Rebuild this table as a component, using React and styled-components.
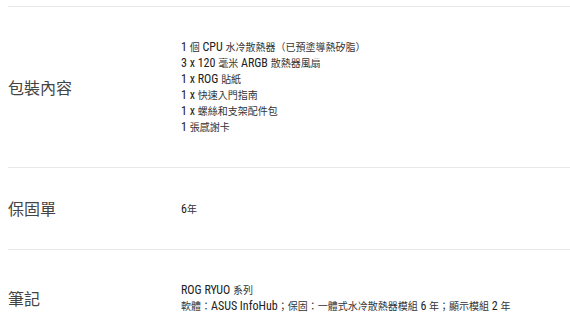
import React from "react"
import styled, { createGlobalStyle } from "styled-components"

const GlobalStyle = createGlobalStyle`
  body {
    margin: 0;
    background: #fff;
    overflow: hidden;
  }
`
const Table = styled.div`
  padding: 6px 0 0 8px;
  font-family: "Roboto Condensed", "Liberation Sans Narrow", Roboto, "Noto Sans CJK TC", sans-serif;
  color: #333;
`
const Row = styled.div`
  display: grid;
  grid-template-columns: 173px 1fr;
  align-items: center;
  border-top: 1px solid #e8e8e8;
  padding: 32px 0;
`
const Label = styled.div`
  font-family: "Noto Sans CJK TC", sans-serif;
  font-size: 16px;
  color: #444;
  line-height: 17px;
`
const Value = styled.div`
  font-size: 12px;
  line-height: 16px;
  color: #222;
`
const Line = styled.div`
  white-space: nowrap;
`
// CJK glyphs sit a bit smaller than the condensed latin in the original
const Han = styled.span`
  font-family: "Noto Sans CJK TC", sans-serif;
  font-size: 10px;
  color: #333;
`

const HAN_RUN = /([\u2E80-\u9FFF\u3000-\u303F\uFF00-\uFFEF]+)/

const MixedText = ({ text }) =>
  text.split(HAN_RUN).map((part, i) =>
    i % 2 ? <Han key={i}>{part}</Han> : part
  )

const specs = [
  {
    label: "包裝內容",
    lines: [
      "1 個 CPU 水冷散熱器（已預塗導熱矽脂）",
      "3 x 120 毫米 ARGB 散熱器風扇",
      "1 x ROG 貼紙",
      "1 x 快速入門指南",
      "1 x 螺絲和支架配件包",
      "1 張感謝卡",
    ],
  },
  { label: "保固單", lines: ["6年"] },
  {
    label: "筆記",
    lines: [
      "ROG RYUO 系列",
      "軟體：ASUS InfoHub；保固：一體式水冷散熱器模組 6 年；顯示模組 2 年",
    ],
  },
]

const App = () => (
  <>
    <GlobalStyle />
    <Table>
      {specs.map((s) => (
        <Row key={s.label}>
          <Label>{s.label}</Label>
          <Value>
            {s.lines.map((l) => (
              <Line key={l}>
                <MixedText text={l} />
              </Line>
            ))}
          </Value>
        </Row>
      ))}
    </Table>
  </>
)

export default App
